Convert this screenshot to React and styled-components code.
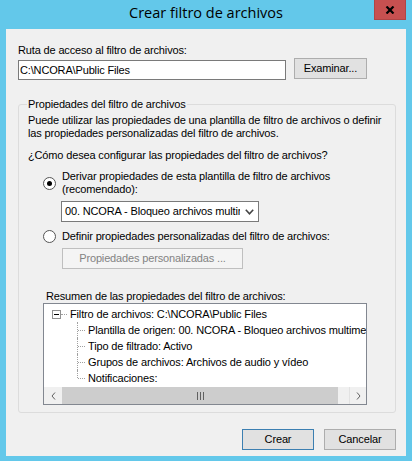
import React from 'react';
import styled, { createGlobalStyle } from 'styled-components';

const GlobalStyle = createGlobalStyle`
  html, body {
    margin: 0;
    padding: 0;
    background: #fff;
  }
  body {
    font-family: "Liberation Sans", Arial, sans-serif;
    font-size: 11px;
    letter-spacing: -0.15px;
    color: #000;
  }
`;

const Chevron = ({ dir }) => (
  <svg width="5" height="8" viewBox="0 0 5 8">
    <path
      d={dir === 'left' ? 'M4 0.5 L1 4 L4 7.5' : 'M1 0.5 L4 4 L1 7.5'}
      fill="none"
      stroke="#606060"
      strokeWidth="1"
    />
  </svg>
);

function App() {
  return (
    <>
      <GlobalStyle />
      <Window>
        <TitleBar>
          <span />
          <Title>Crear filtro de archivos</Title>
          <CloseButton>
            <svg width="10" height="8" viewBox="0 0 10 8">
              <path d="M1.5 0.5 L8.5 7.5 M8.5 0.5 L1.5 7.5" stroke="#000" strokeWidth="2.2" />
            </svg>
          </CloseButton>
        </TitleBar>

        <Client>
          <Label>Ruta de acceso al filtro de archivos:</Label>
          <PathRow>
            <TextBox>{'C:\\NCORA\\Public Files'}</TextBox>
            <DialogButton $width={73}>Examinar...</DialogButton>
          </PathRow>

          <Group>
            <Legend>Propiedades del filtro de archivos</Legend>
            <Label>
              Puede utilizar las propiedades de una plantilla de filtro de archivos o definir
              <br />
              las propiedades personalizadas del filtro de archivos.
            </Label>
            <Question>¿Cómo desea configurar las propiedades del filtro de archivos?</Question>

            <RadioRow>
              <Radio $checked />
              <Label>
                Derivar propiedades de esta plantilla de filtro de archivos
                <br />
                (recomendado):
              </Label>
            </RadioRow>
            <Combo>
              <ComboText>00. NCORA - Bloqueo archivos multimedia</ComboText>
              <ComboArrow>
                <svg width="9" height="6" viewBox="0 0 9 6">
                  <path d="M0.8 0.8 L4.5 4.8 L8.2 0.8" fill="none" stroke="#444" strokeWidth="1.6" />
                </svg>
              </ComboArrow>
            </Combo>

            <RadioRow>
              <Radio />
              <Label>Definir propiedades personalizadas del filtro de archivos:</Label>
            </RadioRow>
            <DisabledButton disabled>Propiedades personalizadas ...</DisabledButton>

            <SummaryLabel>Resumen de las propiedades del filtro de archivos:</SummaryLabel>
            <TreeBox>
              <TreeBody>
                <RootRow>
                  <Expander />
                  <RootLine />
                  {'Filtro de archivos: C:\\NCORA\\Public Files'}
                </RootRow>
                <ChildRow>
                  <Connector />
                  Plantilla de origen: 00. NCORA - Bloqueo archivos multimedia
                </ChildRow>
                <ChildRow>
                  <Connector />
                  Tipo de filtrado: Activo
                </ChildRow>
                <ChildRow>
                  <Connector />
                  Grupos de archivos: Archivos de audio y vídeo
                </ChildRow>
                <ChildRow>
                  <Connector $last />
                  Notificaciones:
                </ChildRow>
              </TreeBody>
              <HScroll>
                <ScrollArrow $width={18}>
                  <Chevron dir="left" />
                </ScrollArrow>
                <Thumb>
                  <svg width="7" height="8" viewBox="0 0 7 8">
                    <path d="M0.5 0 V8 M3.5 0 V8 M6.5 0 V8" stroke="#606060" strokeWidth="1" />
                  </svg>
                </Thumb>
                <Track />
                <ScrollArrow $width={17} $divider>
                  <Chevron dir="right" />
                </ScrollArrow>
              </HScroll>
            </TreeBox>
          </Group>

          <Footer>
            <DialogButton $width={72} $default>Crear</DialogButton>
            <DialogButton $width={72}>Cancelar</DialogButton>
          </Footer>
        </Client>
      </Window>
    </>
  );
}

export default App;

const Window = styled.div`
  width: 412px;
  height: 461px;
  box-sizing: border-box;
  background: #63c8ea;
  padding: 0 6px 5px;
  display: flex;
  flex-direction: column;
`;

const TitleBar = styled.div`
  height: 29px;
  flex: none;
  display: grid;
  grid-template-columns: 1fr auto 1fr;
  align-items: start;
`;

const Title = styled.div`
  font-family: "Open Sans", "Noto Sans", sans-serif;
  font-size: 14.5px;
  letter-spacing: 0;
  line-height: 20px;
  padding-top: 3px;
  color: #000;
`;

const CloseButton = styled.div`
  justify-self: end;
  width: 32px;
  height: 20px;
  box-sizing: border-box;
  background: #c75050;
  border: 1px solid #b04545;
  border-top: none;
  display: flex;
  align-items: center;
  justify-content: center;
`;

const Client = styled.div`
  flex: 1;
  background: #f0f0f0;
  padding: 15px 10px 0 12px;
  display: flex;
  flex-direction: column;
`;

const Label = styled.div`
  line-height: 13px;
  white-space: nowrap;
`;

const PathRow = styled.div`
  display: flex;
  align-items: flex-start;
  gap: 8px;
  margin-top: 1px;
`;

const TextBox = styled.div`
  width: 268px;
  height: 20px;
  margin-top: 2px;
  box-sizing: border-box;
  border: 1px solid #7a7a7a;
  background: #fff;
  padding-left: 1px;
  line-height: 18px;
  white-space: nowrap;
`;

const DialogButton = styled.button`
  width: ${p => p.$width}px;
  height: 21px;
  box-sizing: border-box;
  padding: 0;
  margin: 0;
  background: #e1e1e1;
  border: 1px solid ${p => (p.$default ? '#3c7fb1' : '#adadad')};
  font-family: inherit;
  font-size: 11px;
  letter-spacing: inherit;
  color: #000;
  line-height: 19px;
`;

const Group = styled.fieldset`
  margin: 18px 0 0;
  padding: 3px 9px 7px;
  min-width: 0;
  border: 1px solid #dcdcdc;
  border-radius: 3px;
  display: flex;
  flex-direction: column;
`;

const Legend = styled.legend`
  padding: 0 1px;
  margin-left: -1px;
  line-height: 13px;
`;

const Question = styled(Label)`
  margin-top: 9px;
`;

const RadioRow = styled.div`
  display: flex;
  align-items: center;
  gap: 6px;
  margin: 8px 0 0 15px;
`;

const Radio = styled.span`
  width: 13px;
  height: 13px;
  box-sizing: border-box;
  border-radius: 50%;
  border: 1px solid #555;
  background: #fff;
  display: flex;
  align-items: center;
  justify-content: center;
  flex: none;

  &::after {
    content: '';
    width: 5px;
    height: 5px;
    border-radius: 50%;
    background: ${p => (p.$checked ? '#000' : 'transparent')};
  }
`;

const Combo = styled.div`
  margin: 5px 0 0 33px;
  width: 198px;
  height: 21px;
  box-sizing: border-box;
  border: 1px solid #7a7a7a;
  background: #fff;
  display: flex;
  align-items: center;
`;

const ComboText = styled.span`
  flex: 1;
  padding-left: 3px;
  overflow: hidden;
  white-space: nowrap;
  line-height: 19px;
`;

const ComboArrow = styled.span`
  width: 18px;
  flex: none;
  display: flex;
  justify-content: center;
  padding-top: 1px;
`;

const DisabledButton = styled.button`
  margin: 5px 0 0 34px;
  width: 181px;
  height: 21px;
  box-sizing: border-box;
  padding: 0;
  background: #f4f4f4;
  border: 1px solid #bfbfbf;
  font-family: inherit;
  font-size: 11px;
  letter-spacing: inherit;
  color: #838383;
  line-height: 19px;
`;

const SummaryLabel = styled(Label)`
  margin: 21px 0 0 18px;
`;

const TreeBox = styled.div`
  margin-left: 15px;
  width: 324px;
  height: 102px;
  box-sizing: border-box;
  border: 1px solid #828790;
  background: #fff;
  display: flex;
  flex-direction: column;
`;

const TreeBody = styled.div`
  flex: 1;
  padding-top: 2px;
  overflow: hidden;
`;

const RootRow = styled.div`
  display: flex;
  align-items: center;
  height: 16px;
  padding-left: 8px;
  white-space: nowrap;
`;

const Expander = styled.span`
  width: 9px;
  height: 9px;
  box-sizing: border-box;
  border: 1px solid #919191;
  background: #fff;
  display: flex;
  align-items: center;
  justify-content: center;
  flex: none;

  &::after {
    content: '';
    width: 5px;
    height: 1px;
    background: #000;
  }
`;

const RootLine = styled.span`
  width: 6px;
  margin-right: 3px;
  border-top: 1px dotted #a0a0a0;
  flex: none;
`;

const ChildRow = styled.div`
  display: flex;
  align-items: center;
  height: 16px;
  padding-left: 33px;
  white-space: nowrap;
`;

const Connector = styled.span`
  position: relative;
  width: 8px;
  height: 16px;
  margin-right: 3px;
  flex: none;

  &::before {
    content: '';
    position: absolute;
    left: 0;
    top: 0;
    height: ${p => (p.$last ? '8px' : '16px')};
    border-left: 1px dotted #a0a0a0;
  }

  &::after {
    content: '';
    position: absolute;
    left: 1px;
    top: 8px;
    width: 7px;
    border-top: 1px dotted #a0a0a0;
  }
`;

const HScroll = styled.div`
  display: flex;
  height: 17px;
  flex: none;
  background: #f0f0f0;
`;

const ScrollArrow = styled.div`
  width: ${p => p.$width}px;
  box-sizing: border-box;
  display: flex;
  align-items: center;
  justify-content: center;
  border-left: ${p => (p.$divider ? '1px solid #e2e2e2' : 'none')};
`;

const Thumb = styled.div`
  width: 276px;
  background: #cdcdcd;
  display: flex;
  align-items: center;
  justify-content: center;
`;

const Track = styled.div`
  flex: 1;
`;

const Footer = styled.div`
  display: flex;
  justify-content: flex-end;
  gap: 10px;
  margin-top: 16px;
`;
